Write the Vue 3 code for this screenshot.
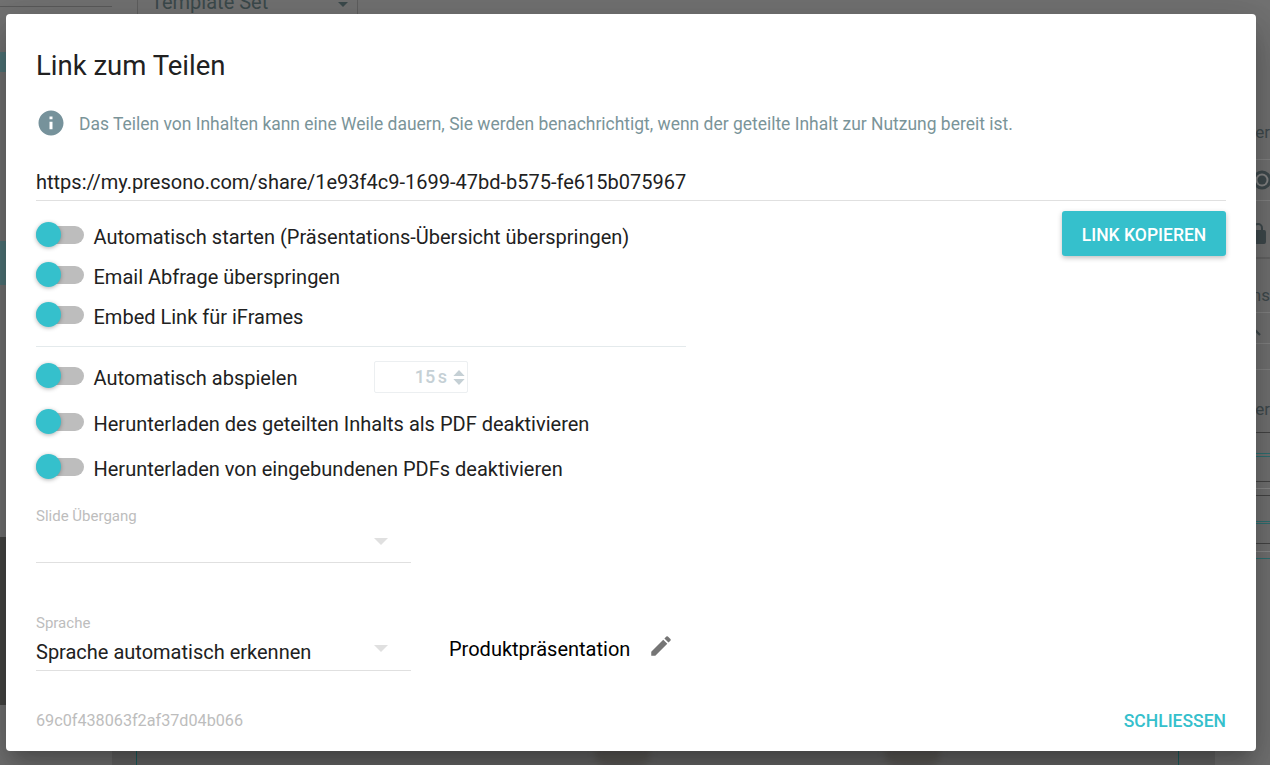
<script setup>
const toggleGroupA = [
  'Automatisch starten (Präsentations-Übersicht überspringen)',
  'Email Abfrage überspringen',
  'Embed Link für iFrames'
]
const toggleGroupB = [
  'Herunterladen des geteilten Inhalts als PDF deaktivieren',
  'Herunterladen von eingebundenen PDFs deaktivieren'
]
// y of the table lines of the page behind the dialog, right edge
const sideLines = [
  { top: 159, kind: 'faint' },
  { top: 200, kind: 'faint' },
  { top: 257, kind: 'mid' },
  { top: 312, kind: 'faint' },
  { top: 343, kind: 'faint' },
  { top: 369, kind: 'faint' },
  { top: 432, kind: 'dark' },
  { top: 453, kind: 'teal' },
  { top: 456, kind: 'teal' },
  { top: 481, kind: 'dark' },
  { top: 488, kind: 'soft' },
  { top: 495, kind: 'dark' },
  { top: 521, kind: 'teal' },
  { top: 523, kind: 'teal' },
  { top: 543, kind: 'dark' },
  { top: 551, kind: 'soft' },
  { top: 558, kind: 'teal' }
]
</script>

<template>
  <div class="page">
    <div class="backdrop">
      <div class="bg-select">Template Set<i class="bg-caret"></i></div>
      <div class="bg-line-left"></div>
      <div class="bg-teal one"></div>
      <div class="bg-teal two"></div>
      <div class="bg-photo"></div>
      <div class="bg-panel"></div>
      <div class="bg-vline left"></div>
      <div class="bg-vline right"></div>
      <div class="bg-blob one"></div>
      <div class="bg-blob two"></div>
      <div class="bg-side">
        <span class="side-text t1">er</span>
        <svg class="side-icon eye" viewBox="0 0 24 24" width="24" height="24">
          <circle cx="12" cy="12" r="9.500" fill="#3f4a4d" />
          <circle cx="12" cy="12" r="6.500" fill="#858585" />
          <circle cx="12" cy="12" r="4.500" fill="#3f4a4d" />
        </svg>
        <svg class="side-icon lock" viewBox="0 0 24 24" width="24" height="24">
          <path fill="#3f4a4d" d="M18 8h-1V6a5 5 0 0 0-10 0v2H6a2 2 0 0 0-2 2v10a2 2 0 0 0 2 2h12a2 2 0 0 0 2-2V10a2 2 0 0 0-2-2zM9 6a3 3 0 0 1 6 0v2H9V6z" />
        </svg>
        <span class="side-text t2">ns</span>
        <svg class="side-icon search" viewBox="0 0 24 24" width="24" height="24">
          <path fill="#3f4a4d" d="M15.500 14h-.8l-.3-.3A6.500 6.500 0 1 0 14 14.700l.3.300v.8l5 5 1.500-1.500-5-5zm-6 0a4.500 4.500 0 1 1 0-9 4.500 4.500 0 0 1 0 9z" />
        </svg>
        <span class="side-text t3">ber</span>
        <div
          v-for="line in sideLines"
          :key="line.top"
          class="side-line"
          :class="line.kind"
          :style="{ top: line.top + 'px' }"
        ></div>
      </div>
    </div>

    <div class="dialog">
      <h2 class="title">Link zum Teilen</h2>

      <div class="notice">
        <svg class="info-icon" viewBox="0 0 24 24" width="30" height="30">
          <path fill="#76929b" d="M12 2C6.480 2 2 6.480 2 12s4.480 10 10 10 10-4.480 10-10S17.520 2 12 2zm1.200 15h-2.400v-6h2.400v6zm0-8h-2.400V6.800h2.400V9z" />
        </svg>
        <span class="notice-text">Das Teilen von Inhalten kann eine Weile dauern, Sie werden benachrichtigt, wenn der geteilte Inhalt zur Nutzung bereit ist.</span>
      </div>

      <div class="link-field">https://my.presono.com/share/1e93f4c9-1699-47bd-b575-fe615b075967</div>

      <div class="options">
        <div class="options-left">
          <div class="group-a">
            <label v-for="text in toggleGroupA" :key="text" class="toggle-row">
              <span class="toggle"><span class="knob"></span></span>
              <span>{{ text }}</span>
            </label>
          </div>
          <div class="divider"></div>
          <div class="group-b">
            <div class="toggle-row autoplay">
              <span class="toggle"><span class="knob"></span></span>
              <span class="autoplay-label">Automatisch abspielen</span>
              <div class="seconds">
                <span>15 s</span>
                <svg viewBox="0 0 12 18" width="12" height="17">
                  <path fill="#c5d0d5" d="M6 1l6 6.500H0zM6 17l6-6.500H0z" />
                </svg>
              </div>
            </div>
            <label class="toggle-row pdf-shared">
              <span class="toggle"><span class="knob"></span></span>
              <span>{{ toggleGroupB[0] }}</span>
            </label>
            <label class="toggle-row pdf-embedded">
              <span class="toggle"><span class="knob"></span></span>
              <span>{{ toggleGroupB[1] }}</span>
            </label>
          </div>
        </div>
        <button class="copy-btn" type="button">LINK KOPIEREN</button>
      </div>

      <div class="select-field transition">
        <div class="field-label">Slide Übergang</div>
        <div class="field-value"><span></span><i class="caret"></i></div>
      </div>

      <div class="language-row">
        <div class="select-field">
          <div class="field-label">Sprache</div>
          <div class="field-value language"><span class="value-text">Sprache automatisch erkennen</span><i class="caret"></i></div>
        </div>
        <div class="name">
          <span>Produktpräsentation</span>
          <svg viewBox="0 0 24 24" width="26" height="26">
            <path fill="#757575" d="M3 17.250V21h3.750L17.810 9.940l-3.750-3.750L3 17.250zM20.710 7.040a1 1 0 0 0 0-1.410l-2.340-2.340a1 1 0 0 0-1.410 0l-1.830 1.830 3.750 3.750 1.830-1.830z" />
          </svg>
        </div>
      </div>

      <div class="footer">
        <span class="hash">69c0f438063f2af37d04b066</span>
        <button class="close-btn" type="button">SCHLIESSEN</button>
      </div>
    </div>
  </div>
</template>

<style>
html, body {
  margin: 0;
  background: #666;
}
</style>

<style scoped>
.page {
  position: relative;
  width: 1270px;
  height: 765px;
  overflow: hidden;
  font-family: Roboto, "Liberation Sans", sans-serif;
  color: #212121;
}

.backdrop {
  position: absolute;
  inset: 0;
  background: #727272;
}

.bg-select {
  position: absolute;
  left: 137px;
  top: -15px;
  width: 221px;
  height: 32px;
  padding-left: 13px;
  box-sizing: border-box;
  font-size: 20px;
  line-height: 32px;
  color: #3c4a4c;
  border: 1px solid #5f5f5f;
}

.bg-caret {
  position: absolute;
  right: 9px;
  top: 16px;
  border-left: 5px solid transparent;
  border-right: 5px solid transparent;
  border-top: 5px solid #3c4a4c;
}

.bg-line-left {
  position: absolute;
  left: 0;
  top: 6px;
  width: 112px;
  height: 1px;
  background: #5a5a5a;
}

.bg-teal {
  position: absolute;
  left: 0;
  width: 8px;
  background: #4f7477;
}

.bg-teal.one {
  top: 52px;
  height: 20px;
}

.bg-teal.two {
  top: 241px;
  height: 44px;
}

.bg-photo {
  position: absolute;
  left: 0;
  top: 537px;
  width: 8px;
  height: 168px;
  background: #454543;
}

.bg-panel {
  position: absolute;
  left: 112px;
  top: 740px;
  width: 1103px;
  height: 25px;
  background: #666;
}

.bg-vline {
  position: absolute;
  top: 745px;
  width: 1px;
  height: 20px;
  background: #1d5f60;
}

.bg-vline.left {
  left: 136px;
}

.bg-vline.right {
  left: 1178px;
}

.bg-blob {
  position: absolute;
  top: 745px;
  width: 55px;
  height: 24px;
  background: #5c5a57;
  border-radius: 0 0 50% 50%;
  filter: blur(3px);
}

.bg-blob.one {
  left: 595px;
}

.bg-blob.two {
  left: 885px;
}

.bg-side {
  position: absolute;
  left: 1240px;
  top: 0;
  width: 30px;
  height: 765px;
}

.side-text {
  position: absolute;
  right: 0;
  font-size: 17px;
  line-height: 20px;
  color: #3f4a4d;
}

.t1 {
  top: 122px;
}

.t2 {
  top: 285px;
}

.t3 {
  top: 399px;
}

.side-icon {
  position: absolute;
}

.eye {
  left: 10px;
  top: 168px;
}

.lock {
  left: 6px;
  top: 222px;
}

.search {
  left: 0;
  top: 315px;
}

.side-line {
  position: absolute;
  left: 0;
  width: 30px;
  height: 1px;
}

.side-line.dark {
  background: #454545;
}

.side-line.mid {
  height: 2px;
  background: #646464;
}

.side-line.teal {
  background: #2e7072;
}

.side-line.soft {
  background: #8a8a8a;
}

.side-line.faint {
  background: #838383;
}

.dialog {
  position: absolute;
  left: 6px;
  top: 14px;
  width: 1250px;
  height: 737px;
  box-sizing: border-box;
  padding: 36px 30px 0;
  background: #fff;
  border-radius: 4px;
  box-shadow: 0 11px 15px -7px rgba(0, 0, 0, 0.2), 0 24px 38px 3px rgba(0, 0, 0, 0.14), 0 9px 46px 8px rgba(0, 0, 0, 0.12);
}

.title {
  margin: 0;
  font-size: 27.5px;
  line-height: 32px;
  font-weight: 400;
}

.notice {
  display: flex;
  align-items: center;
  gap: 13px;
  margin-top: 26px;
  font-size: 17.47px;
  color: #7a9499;
}

.notice-text {
  padding-top: 2px;
}

.link-field {
  margin-top: 32px;
  padding-bottom: 6px;
  font-size: 20px;
  line-height: 24px;
  border-bottom: 1px solid #e0e0e0;
}

.options {
  display: flex;
  justify-content: space-between;
  align-items: flex-start;
}

.options-left {
  width: 650px;
  padding-top: 24px;
}

.group-a {
  display: flex;
  flex-direction: column;
  gap: 16px;
}

.toggle-row {
  display: flex;
  align-items: center;
  font-size: 20px;
  line-height: 24px;
}

.toggle {
  position: relative;
  flex: none;
  width: 48px;
  height: 18px;
  margin-top: -4px;
  margin-right: 9.5px;
  background: #bdbdbd;
  border-radius: 9px;
}

.knob {
  position: absolute;
  left: 0;
  top: -4px;
  width: 25px;
  height: 25px;
  background: #35c0cc;
  border-radius: 50%;
  box-shadow: 0 1px 4px rgba(0, 0, 0, 0.3);
}

.divider {
  margin-top: 17px;
  height: 1px;
  background: #e4eaec;
}

.group-b {
  margin-top: 14px;
}

.toggle-row.autoplay .toggle {
  margin-top: -2px;
}

.toggle-row.pdf-shared {
  margin-top: 19px;
}

.toggle-row.pdf-embedded {
  margin-top: 21px;
}

.autoplay-label {
  width: 280.5px;
  padding-top: 2px;
}

.seconds {
  display: flex;
  align-items: center;
  justify-content: flex-end;
  gap: 6px;
  width: 94px;
  height: 32px;
  padding-right: 2px;
  box-sizing: border-box;
  color: #c5d0d5;
  font-size: 18px;
  font-weight: 500;
  word-spacing: -2px;
  border: 1px solid #eceff1;
  border-radius: 2px;
}

.copy-btn {
  width: 164px;
  height: 45px;
  margin-top: 10px;
  padding: 2px 0 0;
  color: #fff;
  font-family: inherit;
  font-size: 17.5px;
  font-weight: 500;
  background: #35c0cc;
  border: 0;
  border-radius: 3px;
  box-shadow: 0 2px 5px rgba(0, 0, 0, 0.25);
}

.select-field {
  width: 375px;
}

.select-field.transition {
  margin-top: 26px;
}

.field-label {
  font-size: 15px;
  line-height: 18px;
  color: #bdbdbd;
}

.field-value {
  display: flex;
  justify-content: space-between;
  align-items: center;
  height: 37px;
  font-size: 20px;
  border-bottom: 1px solid #e0e0e0;
}

.field-value.language {
  height: 38px;
}

.value-text {
  padding-top: 1px;
}

.caret {
  width: 0;
  height: 0;
  margin-top: -5px;
  margin-right: 23px;
  border-left: 7px solid transparent;
  border-right: 7px solid transparent;
  border-top: 7px solid #e0e0e0;
}

.language-row {
  display: flex;
  align-items: flex-start;
  gap: 38px;
  margin-top: 51px;
}

.name {
  display: flex;
  align-items: center;
  gap: 18px;
  margin-top: 23px;
  font-size: 20px;
  line-height: 24px;
  color: #000;
}

.name svg {
  margin-top: -7px;
}

.footer {
  display: flex;
  justify-content: space-between;
  align-items: center;
  margin-top: 39px;
}

.hash {
  padding-top: 1px;
  font-size: 16.2px;
  line-height: 20px;
  color: #bdbdbd;
}

.close-btn {
  padding: 1px 0 0;
  color: #35c0cc;
  font-family: inherit;
  font-size: 17.5px;
  font-weight: 500;
  background: none;
  border: 0;
}
</style>
